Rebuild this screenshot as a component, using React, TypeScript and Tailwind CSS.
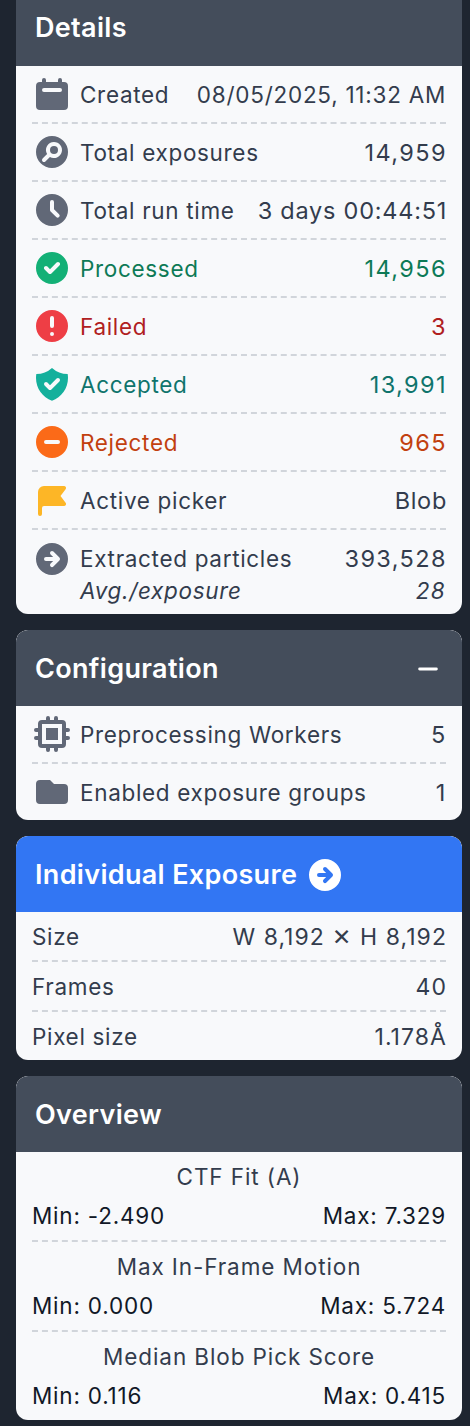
import React from "react";
import {
  HiCalendar, HiSearchCircle, HiClock, HiCheckCircle, HiExclamationCircle, HiShieldCheck,
  HiMinusCircle, HiFlag, HiArrowCircleRight, HiChip, HiFolder, HiMinus,
} from "react-icons/hi";

const font = { fontFamily: "Inter, 'Liberation Sans', sans-serif" };

type R = { icon: React.ComponentType<{ className?: string }>; ic: string; label: string; value: string; tc?: string; vc?: string };

const strong = "text-[23.5px] tracking-[0.06em] -mr-[1px]";

const details: R[] = [
  { icon: HiCalendar, ic: "text-[#616877]", label: "Created", value: "08/05/2025, 11:32 AM", vc: "tracking-[0.033em]" },
  { icon: HiSearchCircle, ic: "text-[#616877]", label: "Total exposures", value: "14,959", vc: strong },
  { icon: HiClock, ic: "text-[#616877]", label: "Total run time", value: "3 days 00:44:51", vc: "text-[23.5px] tracking-[0.032em] -mr-[1px]" },
  { icon: HiCheckCircle, ic: "text-[#13b076]", label: "Processed", value: "14,956", tc: "text-[#0d7a56]", vc: strong },
  { icon: HiExclamationCircle, ic: "text-[#ee3e45]", label: "Failed", value: "3", tc: "text-[#b0201f]", vc: strong },
  { icon: HiShieldCheck, ic: "text-[#14b09c]", label: "Accepted", value: "13,991", tc: "text-[#0f746c]", vc: strong },
  { icon: HiMinusCircle, ic: "text-[#fb6a18]", label: "Rejected", value: "965", tc: "text-[#c2400f]", vc: strong },
  { icon: HiFlag, ic: "text-[#fdb626]", label: "Active picker", value: "Blob", vc: "text-[23.5px] tracking-[0.03em] -mr-[1px]" },
];

const dash = "border-b-2 border-dashed border-[#d1d5db]";

function Row({ r, last }: { r: R; last?: boolean }) {
  const I = r.icon;
  return (
    <div className={`flex items-center justify-between ${last ? "h-[56px]" : `h-[58px] ${dash}`} ${r.tc ?? "text-[#333c4d]"}`}>
      <div className="flex items-center gap-2">
        <I className={`h-10 w-10 shrink-0 ${r.ic}`} />
        <span className="pt-[2px]">{r.label}</span>
      </div>
      <span className={`pt-[2px] ${r.vc ?? ""}`}>{r.value}</span>
    </div>
  );
}

function Header({ title, extra, cls }: { title: string; extra?: React.ReactNode; cls?: string }) {
  return (
    <div className={`flex h-[76px] items-center justify-between rounded-t-xl pl-[19px] pr-5 pt-[2px] text-[27px] font-semibold tracking-[0.012em] text-white ${cls ?? "bg-[#444d5b]"}`}>
      {title}
      {extra}
    </div>
  );
}

function Plain({ label, value, last }: { label: string; value: string; last?: boolean }) {
  return (
    <div className={`flex items-center justify-between pt-[2px] ${last ? "h-[48px]" : `h-[50px] ${dash}`}`}>
      <span>{label}</span>
      <span className="-mr-[1px] text-[23px] tracking-[0.046em]">{value}</span>
    </div>
  );
}

function Stat({ title, min, max, last }: { title: string; min: string; max: string; last?: boolean }) {
  return (
    <div className={`flex flex-col ${last ? "h-[88px]" : `h-[90px] ${dash}`}`}>
      <div className="pt-[11px] text-center leading-[28px] tracking-[0.04em]">{title}</div>
      <div className="flex justify-between pt-[11px] leading-[28px] tracking-[0.035em] text-[#111827]">
        <span>{min}</span>
        <span>{max}</span>
      </div>
    </div>
  );
}

export default function App() {
  return (
    <div style={font} className="flex h-[1426px] w-[470px] flex-col gap-4 overflow-hidden bg-[#1e2530] pl-4 pr-2 text-[22.5px] tracking-[0.03em] text-[#333c4d]">
      <section className="shrink-0 overflow-hidden rounded-b-xl bg-[#f8f9fb]">
        <div className="flex h-[66px] items-center bg-[#444d5b] pl-[19px] pr-5 pb-[9px] text-[27px] font-semibold tracking-[0.012em] text-white">Details</div>
        <div className="px-4">
          {details.map((r) => <Row key={r.label} r={r} />)}
          <div className="flex h-[84px] flex-col pt-[9px]">
            <div className="flex items-center justify-between">
              <div className="flex items-center gap-2">
                <HiArrowCircleRight className="h-10 w-10 text-[#616877]" />
                <span>Extracted particles</span>
              </div>
              <span className={strong}>393,528</span>
            </div>
            <div className="flex justify-between pl-12 italic leading-[24px]">
              <span>Avg./exposure</span>
              <span className="tracking-[0.06em]">28</span>
            </div>
          </div>
        </div>
      </section>

      <section className="shrink-0 overflow-hidden rounded-xl bg-[#f8f9fb]">
        <Header title="Configuration" extra={<HiMinus className="h-7 w-7" />} />
        <div className="px-4">
          <Row r={{ icon: HiChip, ic: "text-[#616877]", label: "Preprocessing Workers", value: "5", vc: "text-[23.5px]" }} />
          <Row last r={{ icon: HiFolder, ic: "text-[#616877]", label: "Enabled exposure groups", value: "1", vc: "text-[23.5px]" }} />
        </div>
      </section>

      <section className="shrink-0 overflow-hidden rounded-xl bg-[#f8f9fb]">
        <Header
          cls="bg-[#3276f3]"
          title="Individual Exposure"
          extra={<span className="mr-auto ml-2"><HiArrowCircleRight className="h-10 w-10" /></span>}
        />
        <div className="px-4">
          <Plain label="Size" value="W 8,192 ✕ H 8,192" />
          <Plain label="Frames" value="40" />
          <Plain last label="Pixel size" value="1.178Å" />
        </div>
      </section>

      <section className="shrink-0 overflow-hidden rounded-xl bg-[#f8f9fb]">
        <Header title="Overview" />
        <div className="px-4">
          <Stat title="CTF Fit (A)" min="Min: -2.490" max="Max: 7.329" />
          <Stat title="Max In-Frame Motion" min="Min: 0.000" max="Max: 5.724" />
          <Stat last title="Median Blob Pick Score" min="Min: 0.116" max="Max: 0.415" />
        </div>
      </section>
    </div>
  );
}
